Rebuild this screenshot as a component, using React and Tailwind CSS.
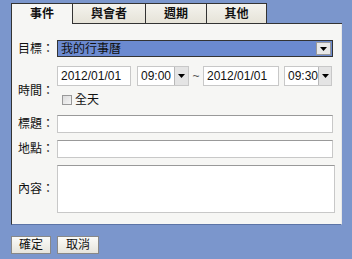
import React from "react";

const font = { fontFamily: '"Liberation Sans", "Noto Sans CJK TC", sans-serif' };

function Arrow() {
  return (
    <div className="w-[14px] h-full flex items-center justify-center bg-[#e4e4e4] border-l border-[#b8b8b8]">
      <svg width="7" height="4" viewBox="0 0 7 4"><path d="M0 0H7L3.5 4Z" fill="#000" /></svg>
    </div>
  );
}

function Tab({ label, active, w }) {
  return (
    <div
      className={
        "h-[21px] flex items-center justify-center text-[12px] font-bold text-[#111] border-t border-r border-[#333] " +
        (active ? "bg-[#f6f6f4] border-l " : "bg-gradient-to-b from-[#f4f3ee] to-[#e6e3d8] border-b ")
      }
      style={{ width: w }}
    >
      {label}
    </div>
  );
}

export default function App() {
  return (
    <div className="w-[352px] h-[259px] bg-[#7b96cc] pt-[3px] pl-[11px] text-[12px] text-[#111]" style={font}>
      <div className="w-[331px] flex flex-col">
        <div className="flex items-end">
          <Tab label="事件" active w="62px" />
          <Tab label="與會者" w="73px" />
          <Tab label="週期" w="61px" />
          <Tab label="其他" w="60px" />
          <div className="flex-1 h-[21px] border-b border-[#333]" />
        </div>
        <div className="h-[201px] bg-[#f6f6f4] border-l border-[#333] border-r border-r-[#e8e8e8] border-b border-b-[#5c74a6] pl-[6px] pt-[16px] flex flex-col">
          <div className="flex items-center h-[17px]">
            <div className="w-[39px]">目標：</div>
            <div className="w-[276px] h-[17px] bg-[#6b8ad0] border border-[#333] flex items-center">
              <div className="flex-1 pl-[3px] text-[#111] leading-none">我的行事曆</div>
              <div className="w-[15px] h-[13px] mr-[1px] flex items-center justify-center bg-[#e8e8e8] border border-[#999]">
                <svg width="7" height="4" viewBox="0 0 7 4"><path d="M0 0H7L3.5 4Z" fill="#000" /></svg>
              </div>
            </div>
          </div>
          <div className="flex mt-[9px]">
            <div className="w-[39px] flex items-center pt-[10px]">時間：</div>
            <div className="flex flex-col">
              <div className="flex items-center h-[20px]">
                <div className="w-[74px] h-[20px] bg-white border border-[#c8c8c8] pl-[3px] flex items-center">2012/01/01</div>
                <div className="ml-[6px] w-[52px] h-[20px] bg-white border border-[#c8c8c8] flex items-center">
                  <div className="flex-1 pl-[3px]">09:00</div>
                  <Arrow />
                </div>
                <div className="w-[14px] text-center text-[#555]">~</div>
                <div className="w-[76px] h-[20px] bg-white border border-[#c8c8c8] pl-[3px] flex items-center">2012/01/01</div>
                <div className="ml-[5px] w-[48px] h-[20px] bg-white border border-[#c8c8c8] flex items-center">
                  <div className="flex-1 pl-[3px]">09:30</div>
                  <Arrow />
                </div>
              </div>
              <div className="flex items-center mt-[8px] ml-[5px] h-[12px]">
                <div className="w-[10px] h-[10px] border border-[#999] bg-gradient-to-br from-[#dcdcdc] to-[#f4f4f4]" />
                <div className="ml-[3px]">全天</div>
              </div>
            </div>
          </div>
          <div className="flex items-center mt-[9px]">
            <div className="w-[39px]">標題：</div>
            <div className="w-[276px] h-[18px] bg-white border border-[#c8c8c8] border-t-[#999]" />
          </div>
          <div className="flex items-center mt-[7px]">
            <div className="w-[39px]">地點：</div>
            <div className="w-[276px] h-[18px] bg-white border border-[#c8c8c8] border-t-[#999]" />
          </div>
          <div className="flex items-center mt-[7px]">
            <div className="w-[39px]">內容：</div>
            <div className="w-[278px] h-[48px] bg-white border border-[#c8c8c8] border-t-[#999]" />
          </div>
        </div>
      </div>
      <div className="flex mt-[11px] gap-[6px]">
        <div className="w-[40px] h-[18px] bg-gradient-to-b from-[#fbfbf8] to-[#e6e4dc] border border-[#888] flex items-center justify-center">確定</div>
        <div className="w-[42px] h-[18px] bg-gradient-to-b from-[#fbfbf8] to-[#e6e4dc] border border-[#888] flex items-center justify-center">取消</div>
      </div>
    </div>
  );
}
